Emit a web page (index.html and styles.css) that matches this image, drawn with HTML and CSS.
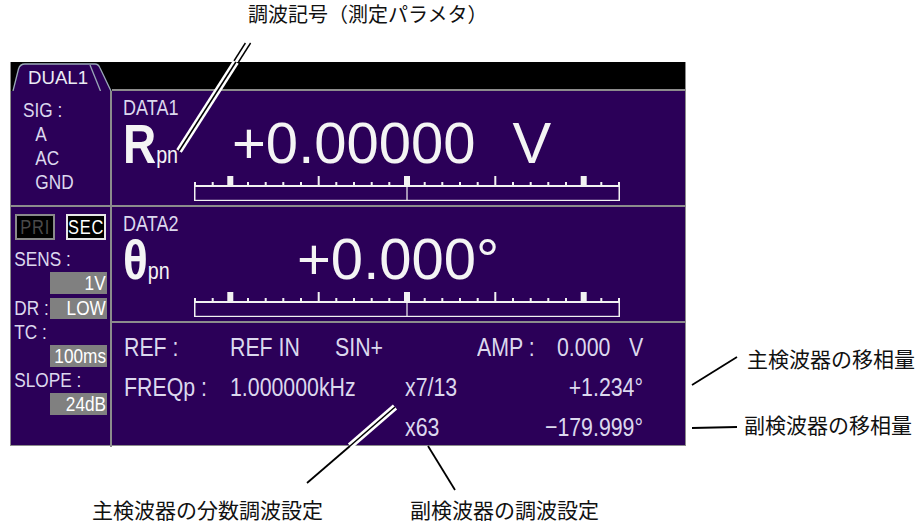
FILE: index.html
```html
<!DOCTYPE html>
<html lang="ja">
<head>
    <meta charset="UTF-8">
    <meta name="viewport" content="width=device-width, initial-scale=1.0">
    <title>DUAL1 表示画面</title>
    <link rel="stylesheet" href="styles.css">
</head>
<body>
<div id="page">
    <div class="note note-top">調波記号（測定パラメタ）</div>

    <div class="main">
        <div class="screen">
            <div class="topbar">
                <svg class="tab" width="101" height="29" viewBox="0 0 101 29">
                    <path d="M2 29 L7.5 7 Q9 2 14 2 L84 2 Q87.5 2 89 6 L100 29 Z" fill="#2b0058"/>
                    <path d="M2 29 L7.5 7 Q9 2 14 2 L84 2 Q87.5 2 89 6 L100 29" fill="none" stroke="#9aa8b8" stroke-width="1.3"/>
                    <path d="M79 3 L89.5 29" fill="none" stroke="#9aa8b8" stroke-width="1.3"/>
                    <text x="17" y="22" class="tab-text" textLength="60" lengthAdjust="spacingAndGlyphs">DUAL1</text>
                </svg>
                <div class="topbar-fill"></div>
            </div>

            <div class="body">
                <div class="side">
                    <div class="sig">
                        <div class="n">SIG :</div>
                        <div class="n sig-item">A</div>
                        <div class="n sig-item">AC</div>
                        <div class="n sig-item">GND</div>
                    </div>
                    <div class="settings">
                        <div class="modes">
                            <div class="mode mode-off"><span class="n nc">PRI</span></div>
                            <div class="mode mode-on"><span class="n nc">SEC</span></div>
                        </div>
                        <div class="lbl n lbl-first">SENS :</div>
                        <div class="val"><span class="n nr">1V</span></div>
                        <div class="row">
                            <div class="lbl n row-lbl">DR :</div>
                            <div class="val row-val"><span class="n nr">LOW</span></div>
                        </div>
                        <div class="lbl n">TC :</div>
                        <div class="val"><span class="n nr">100ms</span></div>
                        <div class="lbl n">SLOPE :</div>
                        <div class="val"><span class="n nr">24dB</span></div>
                    </div>
                </div>

                <div class="data">
                    <div class="meas">
                        <div class="meas-label n">DATA1</div>
                        <div class="meas-row">
                            <div class="sym n">R<span class="sub">pn</span></div>
                            <div class="big">+0.00000</div>
                            <div class="big unit">V</div>
                        </div>
                        <svg class="scale" width="426" height="27"><use href="#scale"/></svg>
                    </div>
                    <div class="meas meas2">
                        <div class="meas-label n">DATA2</div>
                        <div class="meas-row">
                            <div class="sym n">θ<span class="sub">pn</span></div>
                            <div class="big">+0.000°</div>
                        </div>
                        <svg class="scale" width="426" height="27"><use href="#scale"/></svg>
                    </div>
                    <div class="info">
                        <div class="n">REF :</div>
                        <div class="n">REF IN</div>
                        <div class="n">SIN+</div>
                        <div></div>
                        <div class="n">AMP :</div>
                        <div class="amp"><span class="n">0.000</span><span class="n nr">V</span></div>

                        <div class="n">FREQp :</div>
                        <div class="n span2">1.000000kHz</div>
                        <div class="n">x7/13</div>
                        <div class="n nr span2 right">+1.234°</div>

                        <div></div>
                        <div></div>
                        <div></div>
                        <div class="n">x63</div>
                        <div class="n nr span2 right">−179.999°</div>
                    </div>
                </div>
            </div>
        </div>

        <div class="side-notes">
            <div class="note note-r1">主検波器の移相量</div>
            <div class="note note-r2">副検波器の移相量</div>
        </div>
    </div>

    <div class="bottom-notes">
        <div class="note">主検波器の分数調波設定</div>
        <div class="note note-b2">副検波器の調波設定</div>
    </div>

    <!-- leader lines over the screen -->
    <svg class="leaders" width="918" height="523" viewBox="0 0 918 523">
        <g stroke="#000" stroke-width="1.4">
            <line x1="245.4" y1="43" x2="233.3" y2="62"/>
            <line x1="250.6" y1="43" x2="238.5" y2="62"/>
        </g>
        <g stroke="#fff" stroke-width="6.5">
            <line x1="235.9" y1="62" x2="179" y2="151"/>
            <line x1="395" y1="407" x2="350" y2="446"/>
        </g>
        <g stroke="#000" stroke-width="1.5">
            <line x1="235.9" y1="62" x2="179" y2="151"/>
            <line x1="395" y1="407" x2="350" y2="446"/>
        </g>
        <g stroke="#000" stroke-width="1.8">
            <line x1="350" y1="446" x2="307" y2="483"/>
            <line x1="428" y1="446" x2="455" y2="490"/>
            <line x1="692" y1="385" x2="737" y2="357"/>
            <line x1="692" y1="428" x2="737" y2="427"/>
        </g>
    </svg>

    <!-- bar scale shared by DATA1 and DATA2 -->
    <svg class="defs" width="0" height="0">
        <symbol id="scale" viewBox="0 0 426 27">
            <g fill="#f2f2f2">
                <rect x="0" y="10" width="426" height="2"/>
                <rect x="0" y="10" width="1.5" height="16"/>
                <rect x="424.5" y="10" width="1.5" height="16"/>
                <rect x="0" y="24.8" width="426" height="1.2"/>
                <rect x="212.4" y="10" width="1.2" height="16"/>

                <rect x="0" y="7" width="2" height="4"/>
                <rect x="17.7" y="7" width="2" height="4"/>
                <rect x="53" y="7" width="2" height="4"/>
                <rect x="70.7" y="7" width="2" height="4"/>
                <rect x="88.3" y="7" width="2" height="4"/>
                <rect x="106" y="7" width="2" height="4"/>
                <rect x="141.3" y="7" width="2" height="4"/>
                <rect x="159" y="7" width="2" height="4"/>
                <rect x="176.7" y="7" width="2" height="4"/>
                <rect x="194.3" y="7" width="2" height="4"/>
                <rect x="229.7" y="7" width="2" height="4"/>
                <rect x="247.3" y="7" width="2" height="4"/>
                <rect x="265" y="7" width="2" height="4"/>
                <rect x="282.7" y="7" width="2" height="4"/>
                <rect x="318" y="7" width="2" height="4"/>
                <rect x="335.7" y="7" width="2" height="4"/>
                <rect x="353.3" y="7" width="2" height="4"/>
                <rect x="371" y="7" width="2" height="4"/>
                <rect x="406.3" y="7" width="2" height="4"/>
                <rect x="424" y="7" width="2" height="4"/>

                <rect x="123.7" y="1" width="2" height="10"/>
                <rect x="300.3" y="1" width="2" height="10"/>

                <rect x="33.3" y="1" width="6" height="10"/>
                <rect x="210" y="1" width="6" height="10"/>
                <rect x="386.7" y="1" width="6" height="10"/>
            </g>
        </symbol>
    </svg>
</div>
</body>
</html>
```

FILE: styles.css
```css
* {
    box-sizing: border-box;
}

body {
    margin: 0;
    background-color: #fff;
    font-family: "Noto Sans CJK JP", sans-serif;
}

#page {
    position: relative;
    width: 918px;
    height: 523px;
    overflow: hidden;
}

/* annotations */

.note {
    font-size: 21px;
    line-height: 21px;
    color: #111;
    white-space: nowrap;
}

.note-top {
    height: 62px;
    padding: 4px 0 0 248px;
    font-size: 20px;
    line-height: 20px;
}

.main {
    display: flex;
}

.side-notes {
    display: flex;
    flex-direction: column;
    padding-top: 286px;
}

.note-r1 {
    margin-left: 61px;
}

.note-r2 {
    margin-left: 58px;
    margin-top: 45px;
}

.bottom-notes {
    display: flex;
    margin-top: 53px;
    padding-left: 92px;
}

.note-b2 {
    margin-left: 87px;
}

.leaders {
    position: absolute;
    left: 0;
    top: 0;
    pointer-events: none;
}

.defs {
    position: absolute;
}

/* instrument screen: the LCD font is a narrow sans, so text is squeezed */

.n {
    transform: scaleX(0.82);
    transform-origin: left center;
    white-space: nowrap;
}

span.n {
    display: inline-block;
    flex: none;
}

.nr {
    transform-origin: right center;
}

.nc {
    transform-origin: center center;
}

.screen {
    margin-left: 10px;
    width: 676px;
    height: 384px;
    border: 1px solid #8c8c8c;
    border-top: none;
    background-color: #2b0058;
    display: flex;
    flex-direction: column;
    font-family: "Liberation Sans", Arial, sans-serif;
    color: #dcd8ee;
}

.topbar {
    display: flex;
    height: 29px;
    background-color: #000;
}

.tab {
    flex: none;
    display: block;
}

.tab-text {
    font-family: "Liberation Sans", Arial, sans-serif;
    font-size: 19px;
    fill: #ececf4;
}

.topbar-fill {
    flex: 1;
    border-bottom: 2px solid #8c8c8c;
}

.body {
    flex: 1;
    display: flex;
}

.side {
    width: 101px;
    border-right: 2px solid #8c8c8c;
    display: flex;
    flex-direction: column;
}

.sig {
    height: 116px;
    border-bottom: 2px solid #8c8c8c;
    padding: 7px 0 0 12px;
    font-size: 21px;
    line-height: 24px;
}

.sig-item {
    padding-left: 15px;
}

.settings {
    flex: 1;
    font-size: 21px;
}

.modes {
    display: flex;
    gap: 11px;
    padding: 7px 0 0 4px;
}

.mode {
    width: 40px;
    height: 26px;
    border: 2px solid;
    background-color: #000;
    font-size: 20px;
    display: flex;
    justify-content: center;
    align-items: center;
    letter-spacing: 1px;
}

.mode-off {
    border-color: #8a8a8a;
    color: #4a4a4a;
}

.mode-on {
    border-color: #e6e6e6;
    color: #fff;
}

.lbl {
    height: 22px;
    line-height: 22px;
    padding-left: 4px;
    margin-top: 2px;
}

.lbl-first {
    margin-top: 8px;
}

.val {
    margin: 2px 0 0 39px;
    width: 57px;
    height: 22px;
    padding-right: 1px;
    background-color: #808080;
    color: #fff;
    display: flex;
    justify-content: flex-end;
    align-items: center;
}

.row {
    display: flex;
    align-items: center;
    height: 22px;
    margin-top: 3px;
}

.row-lbl {
    width: 39px;
    margin-top: 0;
}

.row-val {
    margin: 0;
    height: 21px;
}

.data {
    flex: 1;
    display: flex;
    flex-direction: column;
}

.meas {
    height: 116px;
    border-bottom: 2px solid #8c8c8c;
    padding: 6px 0 0 11px;
}

.meas-label {
    font-size: 22px;
    line-height: 22px;
}

.meas-row {
    display: flex;
    align-items: baseline;
    height: 48px;
    line-height: 48px;
}

.sym {
    width: 109px;
    font-size: 56px;
    font-weight: bold;
    color: #f4f4f4;
}

.meas2 .sym {
    width: 174px;
}

.sub {
    font-size: 24px;
    font-weight: normal;
}

.big {
    font-family: "Liberation Sans", Arial, sans-serif;
    font-size: 58px;
    color: #f4f4f4;
}

.unit {
    margin-left: 37px;
}

.scale {
    display: block;
    margin: 8px 0 0 71px;
}

.info {
    flex: 1;
    padding: 4px 0 0 12px;
    display: grid;
    grid-template-columns: 106px 105px 70px 72px 80px 86px;
    grid-auto-rows: 40px;
    font-size: 26px;
    line-height: 40px;
}

.span2 {
    grid-column: span 2;
}

.right {
    text-align: right;
}

.amp {
    display: flex;
    justify-content: space-between;
}
```
